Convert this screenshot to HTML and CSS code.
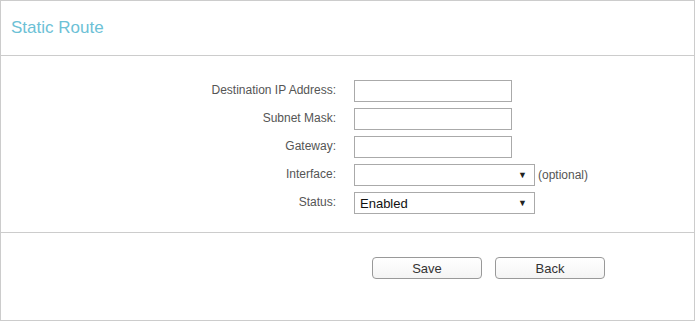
FILE: index.html
```html
<!DOCTYPE html>
<html lang="en">
<head>
  <meta charset="UTF-8" />
  <title>Static Route</title>
  <link rel="stylesheet" href="styles.css">
</head>
<body>
<main class="panel">
  <header class="panel-head">
    <h2>Static Route</h2>
  </header>

  <form class="route-form">
    <label>Destination IP Address:</label>
    <div class="field"><input type="text" class="text-box"></div>

    <label>Subnet Mask:</label>
    <div class="field"><input type="text" class="text-box"></div>

    <label>Gateway:</label>
    <div class="field"><input type="text" class="text-box"></div>

    <label>Interface:</label>
    <div class="field">
      <div class="drop wide"><span></span><i>&#9660;</i></div>
      <span class="hint">(optional)</span>
    </div>

    <label>Status:</label>
    <div class="field">
      <div class="drop wide"><span>Enabled</span><i>&#9660;</i></div>
    </div>
  </form>

  <footer class="panel-foot">
    <button type="button">Save</button>
    <button type="button">Back</button>
  </footer>
</main>
</body>
</html>
```

FILE: styles.css
```css
body {
  margin: 0;
  font-family: 'Liberation Sans', Arial, sans-serif;
  background: white;
}

.panel {
  width: 693px;
  height: 319px;
  border: 1px solid #ccc;
  display: flex;
  flex-direction: column;
}

.panel-head {
  height: 54px;
  border-bottom: 1px solid #ccc;
  padding-left: 10px;
}

.panel-head h2 {
  margin: 0;
  padding-top: 17px;
  font-size: 17px;
  font-weight: normal;
  color: #6cc1d6;
}

.route-form {
  display: grid;
  grid-template-columns: 335px auto;
  column-gap: 18px;
  row-gap: 6px;
  padding: 24px 0 18px;
  border-bottom: 1px solid #ccc;
}

.route-form label {
  text-align: right;
  font-size: 12px;
  color: #555;
  line-height: 20px;
  height: 22px;
}

.field {
  display: flex;
  align-items: center;
  height: 22px;
}

.text-box {
  box-sizing: border-box;
  width: 158px;
  height: 22px;
  margin: 0;
  border: 1px solid #aaa;
  padding: 0 4px;
  font-size: 12px;
}

.drop {
  box-sizing: border-box;
  height: 22px;
  border: 1px solid #aaa;
  display: flex;
  align-items: center;
  justify-content: space-between;
  padding: 0 7px 0 5px;
  font-size: 13px;
  color: #111;
}

.drop.wide {
  width: 181px;
}

.drop i {
  font-style: normal;
  font-size: 9px;
  color: #222;
}

.hint {
  margin-left: 3px;
  font-size: 12px;
  color: #555;
}

.panel-foot {
  display: flex;
  gap: 13px;
  padding: 24px 0 0 371px;
}

.panel-foot button {
  width: 110px;
  height: 22px;
  border: 1px solid #999;
  border-radius: 4px;
  background: linear-gradient(#fff, #f4f4f4);
  font-family: 'Liberation Sans', Arial, sans-serif;
  font-size: 13px;
  color: #333;
  padding: 0;
}
```
